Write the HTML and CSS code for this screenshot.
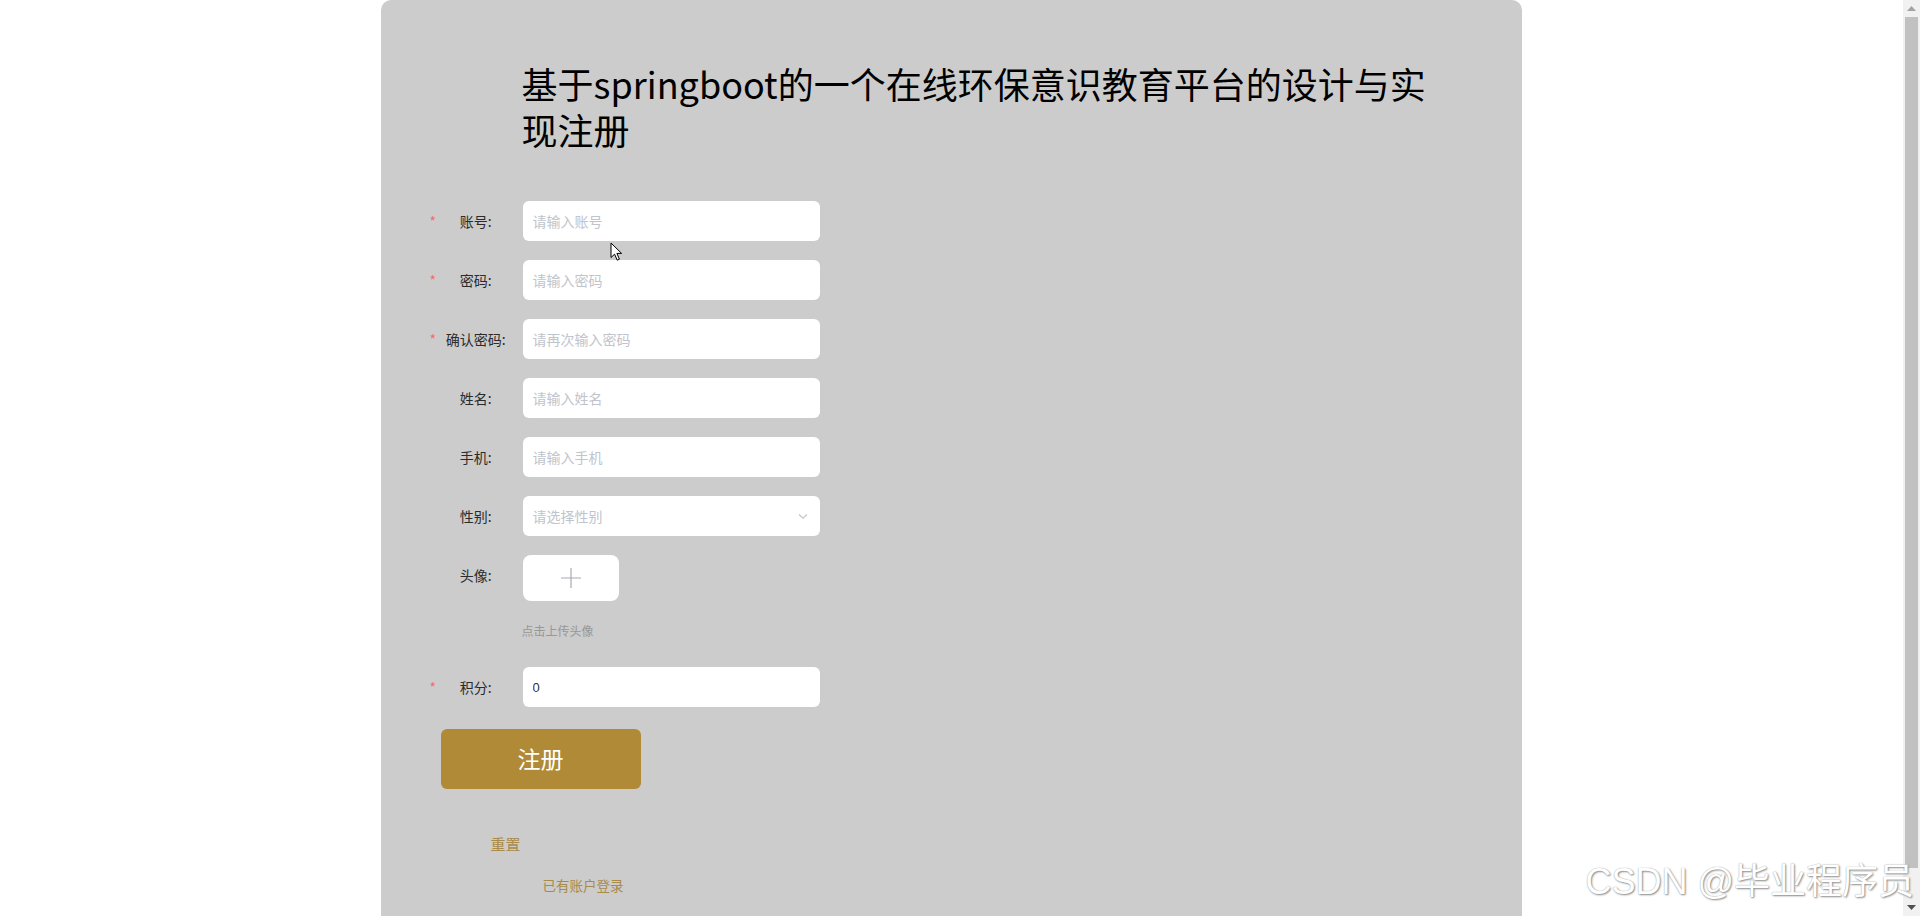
FILE: index.html
```html
<!DOCTYPE html>
<html lang="zh-CN">
<head>
<meta charset="utf-8">
<title>注册</title>
<link rel="stylesheet" href="styles.css">
</head>
<body>
<div class="viewport">
  <div class="panel">
    <h1 class="title">基于springboot的一个在线环保意识教育平台的设计与实现注册</h1>
    <form class="form">
      <div class="row">
        <label class="lbl"><span class="req">*</span><span class="txt">账号:</span></label>
        <input class="inp" type="text" placeholder="请输入账号">
      </div>
      <div class="row">
        <label class="lbl"><span class="req">*</span><span class="txt">密码:</span></label>
        <input class="inp" type="password" placeholder="请输入密码">
      </div>
      <div class="row">
        <label class="lbl"><span class="req">*</span><span class="txt">确认密码:</span></label>
        <input class="inp" type="password" placeholder="请再次输入密码">
      </div>
      <div class="row">
        <label class="lbl"><span class="req"></span><span class="txt">姓名:</span></label>
        <input class="inp" type="text" placeholder="请输入姓名">
      </div>
      <div class="row">
        <label class="lbl"><span class="req"></span><span class="txt">手机:</span></label>
        <input class="inp" type="text" placeholder="请输入手机">
      </div>
      <div class="row">
        <label class="lbl"><span class="req"></span><span class="txt">性别:</span></label>
        <div class="select">
          <span class="ph">请选择性别</span>
          <svg class="chev" width="12" height="12" viewBox="0 0 12 12"><path d="M2 4.5 L6 8.2 L10 4.5" fill="none" stroke="#c0c4cc" stroke-width="1.1"/></svg>
        </div>
      </div>
      <div class="row row-avatar">
        <label class="lbl"><span class="req"></span><span class="txt">头像:</span></label>
        <div class="avatar-col">
          <div class="upload">
            <svg width="22" height="22" viewBox="0 0 22 22"><path d="M11 1 V21 M1 11 H21" stroke="#a8abb2" stroke-width="1.2" fill="none"/></svg>
          </div>
          <div class="tip">点击上传头像</div>
        </div>
      </div>
      <div class="row row-score">
        <label class="lbl"><span class="req">*</span><span class="txt">积分:</span></label>
        <input class="inp inp-val" type="text" value="0">
      </div>
      <button class="btn-reg" type="button">注册</button>
      <button class="btn-reset" type="button">重置</button>
      <a class="login">已有账户登录</a>
    </form>
    <svg class="cursor" width="13" height="20" viewBox="0 0 13 20"><path d="M1 1 L1 15.5 L4.6 12.2 L7.2 18.2 L9.4 17.2 L6.9 11.4 L11.6 11.4 Z" fill="#fff" stroke="#000" stroke-width="1"/></svg>
  </div>
</div>
<div class="scrollbar">
  <div class="sb-btn"><svg width="9" height="5" viewBox="0 0 9 5"><path d="M0 5 L4.5 0 L9 5 Z" fill="#a3a3a3"/></svg></div>
  <div class="sb-track"><div class="sb-thumb"></div></div>
  <div class="sb-btn"><svg width="9" height="5" viewBox="0 0 9 5"><path d="M0 0 L4.5 5 L9 0 Z" fill="#505050"/></svg></div>
</div>
<div class="watermark">CSDN @毕业程序员</div>
</body>
</html>
```
FILE: styles.css
```css
html, body {
  margin: 0;
  padding: 0;
  height: 916px;
  overflow: hidden;
  background: #ffffff;
  font-family: "Noto Sans CJK SC", "Noto Sans", sans-serif;
}
body {
  display: flex;
  position: relative;
}
.viewport {
  flex: 1;
  height: 916px;
  overflow: hidden;
}
.panel {
  position: relative;
  width: 60%;
  margin: 0 auto;
  height: 1000px;
  background: #cccccc;
  border-radius: 10px 10px 0 0;
}
.title {
  margin: 0 0 0 141px;
  padding-top: 60px;
  width: 910px;
  font-size: 36px;
  line-height: 46px;
  font-weight: normal;
  color: #000;
}
.form {
  margin-top: 49px;
  padding-left: 49px;
  display: flex;
  flex-direction: column;
  align-items: flex-start;
}
.row {
  display: flex;
  align-items: flex-start;
  margin-bottom: 19px;
}
.lbl {
  display: flex;
  height: 40px;
  line-height: 40px;
  font-size: 14px;
  color: #2b2b2b;
  margin-right: 15px;
}
.req {
  width: 14px;
  color: #f56c6c;
  font-size: 14px;
  line-height: 41px;
}
.txt {
  width: 64px;
  text-align: center;
  white-space: nowrap;
}
.inp {
  box-sizing: border-box;
  width: 297px;
  height: 40px;
  border: none;
  border-radius: 6px;
  background: #fff;
  padding: 0 10px;
  font-family: "Noto Sans CJK SC", "Noto Sans", sans-serif;
  font-size: 14px;
  color: #333;
  outline: none;
}
.inp::placeholder {
  color: #c0c4cc;
}
.inp-val {
  font-family: "Liberation Sans", "Noto Sans CJK SC", sans-serif;
  font-size: 13px;
}
.select {
  box-sizing: border-box;
  width: 297px;
  height: 40px;
  border-radius: 6px;
  background: #fff;
  padding: 0 10px;
  display: flex;
  align-items: center;
  justify-content: space-between;
  font-size: 14px;
}
.ph {
  color: #c0c4cc;
}
.chev {
  margin-right: 1px;
}
.row-avatar {
  margin-bottom: 26px;
}
.avatar-col {
  display: flex;
  flex-direction: column;
}
.upload {
  width: 96px;
  height: 46px;
  background: #fff;
  border-radius: 8px;
  display: flex;
  align-items: center;
  justify-content: center;
}
.tip {
  margin-top: 20px;
  margin-left: -1px;
  font-size: 12px;
  line-height: 20px;
  color: #979797;
}
.row-score {
  margin-bottom: 22px;
}
.btn-reg {
  margin-left: 11px;
  width: 200px;
  height: 60px;
  border: none;
  border-radius: 6px;
  background: #b08a37;
  color: #fff;
  font-family: "Noto Sans CJK SC", "Noto Sans", sans-serif;
  font-size: 23px;
  padding: 0 0 2px;
}
.btn-reset {
  margin-top: 45px;
  margin-left: 61px;
  padding: 0;
  border: none;
  background: transparent;
  color: #a88a4a;
  font-family: "Noto Sans CJK SC", "Noto Sans", sans-serif;
  font-size: 15px;
  line-height: 20px;
}
.login {
  margin-top: 21px;
  margin-left: 113px;
  font-size: 13.5px;
  line-height: 20px;
  color: #a88a4a;
}
.cursor {
  position: absolute;
  left: 229px;
  top: 242px;
}
.scrollbar {
  width: 17px;
  height: 916px;
  background: #f1f1f1;
  display: flex;
  flex-direction: column;
}
.sb-btn {
  height: 17px;
  display: flex;
  align-items: center;
  justify-content: center;
}
.sb-track {
  flex: 1;
  padding: 0 2px;
}
.sb-thumb {
  height: 851px;
  background: #c1c1c1;
}
.watermark {
  position: absolute;
  right: 6px;
  top: 855px;
  font-family: "Liberation Sans", "Noto Sans CJK SC", sans-serif;
  font-size: 36px;
  line-height: 54px;
  color: #fff;
  text-shadow: 1px 1px 2px #8a8a8a, 0 0 1px #999;
  white-space: nowrap;
}
```
